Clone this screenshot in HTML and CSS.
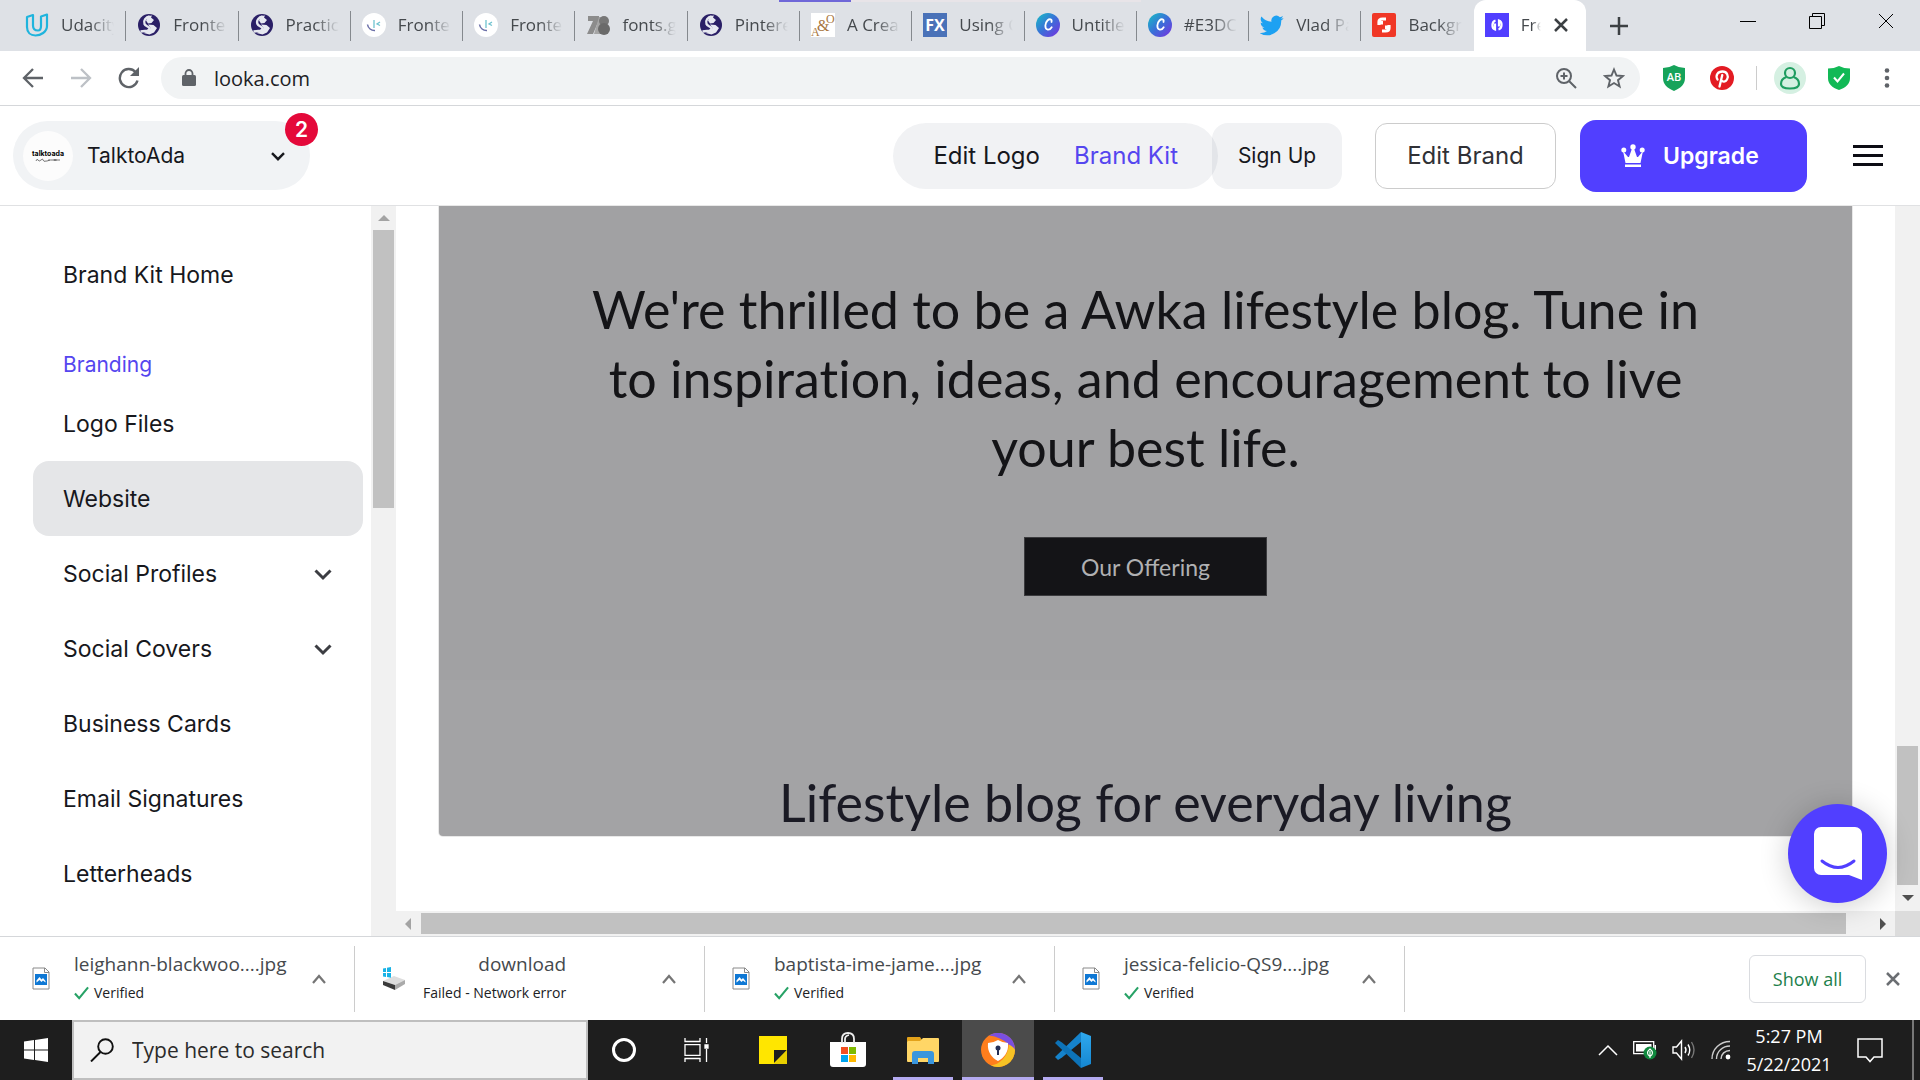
FILE: index.html
```html
<!DOCTYPE html>
<html lang="en">
<head>
<meta charset="utf-8">
<title>Free Brand Kit</title>
<link rel="stylesheet" href="styles.css">
</head>
<body>
<svg width="0" height="0" class="defs" aria-hidden="true">
  <defs>
    <linearGradient id="canva" x1="0" y1="0" x2="1" y2="1"><stop offset="0.1" stop-color="#1cb0c8"/><stop offset="0.5" stop-color="#3a6fd8"/><stop offset="1" stop-color="#7a2fe0"/></linearGradient>
    <linearGradient id="code" x1="0" y1="0" x2="0" y2="1"><stop offset="0" stop-color="#2fa9ee"/><stop offset="1" stop-color="#1586d0"/></linearGradient>
    <symbol id="globe" viewBox="0 0 24 24"><circle cx="12" cy="12" r="11" fill="#2a1f66"/><path d="M12.500 3.500c-3.500.5-6.500 4-5 7.500 1 2.500 4 2 5 4.500.3 1.200-.8 2-2.300 2.300l-6.700.7" fill="none" stroke="#e6e8f0" stroke-width="2.400"/><path d="M11 3l4-.5-1 2 3 2.500-2.500 3-3.500.500-2-3zM11 11.500l5.500.5 3.500 3-3 4.500-4.500 2-6-1.500 4.500-2 2.500-3z" fill="#e6e8f0"/></symbol>
    <symbol id="mentor" viewBox="0 0 24 24"><circle cx="12" cy="12" r="12" fill="#fff"/><path d="M5.500 11.500a7 7 0 0 0 7.500 6" fill="none" stroke="#6b6fa8" stroke-width="1.500"/><path d="M12 7v8M18 9l-3 2 3 1.500" fill="none" stroke="#6fc3cf" stroke-width="1.300"/></symbol>
    <symbol id="canva-logo" viewBox="0 0 24 24"><circle cx="12" cy="12" r="12" fill="url(#canva)"/><path d="M15.500 9c.8-3-2-3.500-4-1.500-2.500 2.500-3.200 8 0 9 1.800.3 3.300-.7 4.200-2.300" fill="none" stroke="#fff" stroke-width="1.800" stroke-linecap="round"/></symbol>
    <symbol id="chev" viewBox="0 0 20 20"><path d="M2.500 6.500l7.500 7.500 7.500-7.500" fill="none" stroke="currentColor" stroke-width="3"/></symbol>
    <symbol id="up" viewBox="0 0 16 16"><path d="M2 12l6-7 6 7" fill="none" stroke="#757575" stroke-width="2.200"/></symbol>
    <symbol id="doc" viewBox="0 0 18 23"><path d="M1 1h12l4 4v17H1z" fill="#fff" stroke="#8a8a8a"/><path d="M12.500 1v4.500H17" fill="none" stroke="#8a8a8a"/><path d="M3 7h12v11H3z" fill="#0f78d4"/><path d="M4.500 15.500v-2l3-3.500 2 2.500 1.500-1.500 2.500 3v1.500l-2.500-2-1.500 1.500-2-2z" fill="#fff"/></symbol>
    <symbol id="tick" viewBox="0 0 16 14"><path d="M1 7.500l4.500 5L15 1" fill="none" stroke="#27a266" stroke-width="2.200"/></symbol>
    <symbol id="cross" viewBox="0 0 16 16"><path d="M2 2l12 12M14 2L2 14" fill="none" stroke="currentColor" stroke-width="2.500"/></symbol>
  </defs>
</svg>

<header class="tabstrip">
  <span class="progress"></span><span class="progress-rest"></span>
  <nav class="tabs" aria-label="Tabs">
    <a class="tab" href="#"><svg class="fav" viewBox="0 0 24 24"><path d="M8 2L2 4v10c0 5.500 3.500 8.500 8.500 8.500S22 19 22 13V1.500L16 3.500V13c0 3-1 4.500-3 4.500-3.500 0-5-2-5-5z" fill="none" stroke="#1fb4dd" stroke-width="2.200" stroke-linejoin="round"/></svg><span class="tab-text">Udacity</span></a>
    <a class="tab" href="#"><svg class="fav"><use href="#globe"/></svg><span class="tab-text">Fronte</span></a>
    <a class="tab" href="#"><svg class="fav"><use href="#globe"/></svg><span class="tab-text">Practic</span></a>
    <a class="tab" href="#"><svg class="fav"><use href="#mentor"/></svg><span class="tab-text">Fronte</span></a>
    <a class="tab" href="#"><svg class="fav"><use href="#mentor"/></svg><span class="tab-text">Fronte</span></a>
    <a class="tab" href="#"><svg class="fav" viewBox="0 0 24 24"><path d="M2 3h11v4L7 21H1l6-13H2z" fill="#8c8c8c"/><path d="M13 4h3v17H8z" fill="#a5a5a5"/><circle cx="18" cy="8" r="5" fill="#777"/><circle cx="18" cy="16" r="6" fill="#6a6a6a"/></svg><span class="tab-text">fonts.g</span></a>
    <a class="tab" href="#"><svg class="fav"><use href="#globe"/></svg><span class="tab-text">Pintere</span></a>
    <a class="tab" href="#"><svg class="fav" viewBox="0 0 24 24"><path fill="#fff" d="M0 0h24v24H0z"/><g font-family="Liberation Serif, serif" fill="#a9773f"><text x="0" y="23" font-size="12">A</text><text x="6" y="18" font-size="16">&amp;</text><text x="15" y="10" font-size="12">O</text></g></svg><span class="tab-text">A Crea</span></a>
    <a class="tab" href="#"><svg class="fav" viewBox="0 0 24 24"><path fill="#4a72b8" d="M0 0h24v24H0z"/><text x="12" y="18" text-anchor="middle" font-family="Open Sans, sans-serif" font-weight="700" font-size="16" fill="#fff">FX</text></svg><span class="tab-text">Using C</span></a>
    <a class="tab" href="#"><svg class="fav"><use href="#canva-logo"/></svg><span class="tab-text">Untitle</span></a>
    <a class="tab" href="#"><svg class="fav"><use href="#canva-logo"/></svg><span class="tab-text">#E3DC</span></a>
    <a class="tab" href="#"><svg class="fav" viewBox="0 0 24 24"><path fill="#1da1f2" d="M23.600 4.900c-.9.400-1.800.6-2.800.8 1-.6 1.800-1.600 2.200-2.700-1 .6-2 1-3.100 1.200A4.900 4.900 0 0 0 11.500 8.700 14 14 0 0 1 1.400 3.600a4.900 4.900 0 0 0 1.500 6.600c-.8 0-1.600-.2-2.200-.6v.1c0 2.400 1.700 4.400 3.900 4.800-.7.200-1.500.2-2.200.1.600 2 2.400 3.400 4.600 3.400A9.900 9.900 0 0 1-.3 20 14 14 0 0 0 21.200 7.500c1-.7 1.800-1.600 2.400-2.600z"/></svg><span class="tab-text">Vlad Pa</span></a>
    <a class="tab no-sep" href="#"><svg class="fav" viewBox="0 0 24 24"><rect width="24" height="24" rx="2" fill="#f03726"/><path d="M14 6h-3.500C8.500 6 7 7 7 9v3M10 18h3.500c2 0 3.500-1 3.500-3v-3" fill="none" stroke="#fff" stroke-width="3.200"/><path d="M7 8h4v3.500H7zM13 12.500h4V16h-4z" fill="#fff"/></svg><span class="tab-text">Backgr</span></a>
    <a class="tab active" href="#" aria-current="page"><svg class="fav" viewBox="0 0 24 24"><path fill="#513fff" d="M0 0h24v24H0z"/><path d="M10.500 7.500c-4 1-4 8-.5 9v-6M13.500 16.500c4-1 4-8 .5-9v6" fill="none" stroke="#fff" stroke-width="2.200"/></svg><span class="tab-text">Fre</span><svg class="tab-x"><use href="#cross"/></svg></a>
  </nav>
  <button class="icon-btn new-tab" aria-label="New tab"><svg width="20" height="20" viewBox="0 0 20 20"><path d="M10 1v18M1 10h18" stroke="#3c4043" stroke-width="2.500"/></svg></button>
  <div class="win-controls">
    <button class="icon-btn" aria-label="Minimize"><svg width="16" height="16" viewBox="0 0 16 16"><path d="M0 8.500h16" stroke="#000"/></svg></button>
    <button class="icon-btn" aria-label="Restore"><svg width="16" height="16" viewBox="0 0 16 16" fill="none" stroke="#000"><path d="M.5 3.500h12v12H.5zM3.500 3.500v-3h12v12h-3"/></svg></button>
    <button class="icon-btn" aria-label="Close"><svg width="16" height="16" viewBox="0 0 16 16"><path d="M1 1l14 14M15 1L1 15" stroke="#000"/></svg></button>
  </div>
</header>

<div class="toolbar">
  <button class="icon-btn" aria-label="Back"><svg width="22" height="22" viewBox="0 0 22 22" fill="none" stroke="#5f6368" stroke-width="2.300"><path d="M21 11H2M11 2L2 11l9 9"/></svg></button>
  <button class="icon-btn" aria-label="Forward"><svg width="22" height="22" viewBox="0 0 22 22" fill="none" stroke="#bdc1c6" stroke-width="2.300"><path d="M1 11h19M11 2l9 9-9 9"/></svg></button>
  <button class="icon-btn" aria-label="Reload"><svg width="22" height="22" viewBox="0 0 22 22"><path d="M19.500 13.500A9 9 0 1 1 17.500 5" fill="none" stroke="#5f6368" stroke-width="2.400"/><path d="M21 0v9h-9z" fill="#5f6368"/></svg></button>
  <div class="omnibox">
    <svg width="14" height="18" viewBox="0 0 14 18"><rect y="6" width="14" height="11" rx="1.500" fill="#5f6368"/><path d="M3.500 7V4.500a3.500 3.500 0 0 1 7 0V7" fill="none" stroke="#5f6368" stroke-width="1.800"/></svg>
    <input class="url" type="text" value="looka.com" aria-label="Address">
    <button class="icon-btn" aria-label="Zoom"><svg width="22" height="22" viewBox="0 0 22 22" fill="none" stroke="#5f6368" stroke-width="2"><circle cx="9" cy="9" r="7"/><path d="M14 14l7 7M9 5.500v7M5.500 9h7"/></svg></button>
    <button class="icon-btn" aria-label="Bookmark"><svg width="22" height="22" viewBox="0 0 22 22" fill="none" stroke="#5f6368" stroke-width="1.900"><path d="M11 2.500l2.500 6 6.500.5-5 4.200 1.600 6.300L11 16l-5.600 3.500L7 13.200 2 9l6.500-.5z"/></svg></button>
  </div>
  <div class="extensions">
    <button class="icon-btn" aria-label="Ad blocker"><svg width="22" height="26" viewBox="0 0 22 26"><path d="M0 3Q6 3 11 0q5 3 11 3v10c0 6-4 10-11 13C4 23 0 19 0 13z" fill="#16a35a"/><text x="11" y="16" text-anchor="middle" font-family="Open Sans, sans-serif" font-weight="600" font-size="11" fill="#fff">AB</text></svg></button>
    <button class="icon-btn pin" aria-label="Save to Pinterest"><svg width="24" height="24" viewBox="0 0 24 24"><circle cx="12" cy="12" r="12" fill="#e31b23"/><path d="M9.500 20.500L12.300 9M7.500 13.500c-2.500-4.500.5-8 5-8s6.500 4.500 4.500 8c-1.500 2.700-4.500 2.500-5.500.8" fill="none" stroke="#fff" stroke-width="2.300" stroke-linecap="round"/></svg></button>
    <span class="divider"></span>
    <button class="icon-btn profile" aria-label="Profile"><svg width="22" height="24" viewBox="0 0 22 24" fill="none" stroke="#1f9d60" stroke-width="2.200"><circle cx="11" cy="7" r="5"/><path d="M7.500 11C4 12 2 15 2 18c0 3 4 4.500 9 4.500s9-1.500 9-4.500c0-3-2-6-5.500-7"/></svg></button>
    <button class="icon-btn" aria-label="Security"><svg width="22" height="24" viewBox="0 0 22 24"><path d="M0 2.500Q6 2.500 11 0q5 2.500 11 2.500V12c0 6-4 9.500-11 12C4 21.500 0 18 0 12z" fill="#12b956"/><path d="M6 11.500l3.500 4 6.500-8" fill="none" stroke="#fff" stroke-width="2"/></svg></button>
    <button class="icon-btn" aria-label="Menu"><svg width="6" height="20" viewBox="0 0 6 20" fill="#5f6368"><circle cx="3" cy="2.500" r="2.300"/><circle cx="3" cy="10" r="2.300"/><circle cx="3" cy="17.500" r="2.300"/></svg></button>
  </div>
</div>

<div class="site-head">
  <button class="brand">
    <span class="brand-logo"><svg width="50" height="50" viewBox="0 0 50 50"><text x="25" y="25" text-anchor="middle" font-family="Inter, sans-serif" font-weight="700" font-size="7">talktoada</text><path d="M13 30q1-3 2-1t3 0 2 0 4 1 2-1 4 0 2 0 5 0" fill="none" stroke="#555" stroke-width=".8"/></svg></span>
    <span>TalktoAda</span>
    <svg class="brand-chev"><use href="#chev"/></svg>
    <span class="badge">2</span>
  </button>
  <nav class="modes"><a href="#">Edit Logo</a><a href="#" class="current">Brand Kit</a></nav>
  <button class="signup">Sign Up</button>
  <button class="edit-brand">Edit Brand</button>
  <button class="upgrade"><svg width="24" height="24" viewBox="0 0 24 24" fill="#fff"><circle cx="2.800" cy="6" r="2.500"/><circle cx="12" cy="3" r="2.700"/><circle cx="21.200" cy="6" r="2.500"/><path d="M2 7l2.500 12h15L22 7l-5 6h-1L12.800 4h-1.600L8 13H7zM4 20.500h16V23H4z"/></svg>Upgrade</button>
  <button class="icon-btn burger" aria-label="Menu"><svg width="30" height="21" viewBox="0 0 30 21"><path d="M0 1.500h30M0 10.500h30M0 19.500h30" stroke="#0c0c14" stroke-width="3"/></svg></button>
</div>

<main class="workspace">
  <aside class="sidebar">
    <a class="item home" href="#">Brand Kit Home</a>
    <h2 class="group">Branding</h2>
    <a class="item" href="#">Logo Files</a>
    <a class="item selected" href="#" aria-current="page">Website</a>
    <button class="item">Social Profiles<svg class="item-chev"><use href="#chev"/></svg></button>
    <button class="item">Social Covers<svg class="item-chev"><use href="#chev"/></svg></button>
    <a class="item" href="#">Business Cards</a>
    <a class="item" href="#">Email Signatures</a>
    <a class="item" href="#">Letterheads</a>
  </aside>
  <div class="vbar"><span class="arrow arrow-up"></span><span class="thumb side-thumb"></span></div>
  <div class="content">
    <section class="stage">
      <div class="preview">
        <div class="hero">
          <p class="hero-text">We're thrilled to be a Awka lifestyle blog. Tune in to inspiration, ideas, and encouragement to live your best life.</p>
          <button class="offering">Our Offering</button>
        </div>
        <div class="living"><h1>Lifestyle blog for everyday living</h1></div>
      </div>
      <button class="chat" aria-label="Open chat"><svg width="48" height="54" viewBox="0 0 48 54"><path d="M7 0h34a7 7 0 0 1 7 7v46l-13-5H7a7 7 0 0 1-7-7V7a7 7 0 0 1 7-7z" fill="#fff"/><path d="M8 34q16 13 32 0" fill="none" stroke="#513fff" stroke-width="3" stroke-linecap="round"/></svg></button>
    </section>
    <div class="hbar"><span class="arrow arrow-left"></span><span class="thumb page-thumb-x"></span><span class="arrow arrow-right"></span></div>
  </div>
  <div class="vbar page-bar"><span class="thumb page-thumb"></span><span class="arrow arrow-down"></span><span class="corner"></span></div>
</main>

<section class="downloads" aria-label="Downloads">
  <div class="dl"><svg class="dl-icon"><use href="#doc"/></svg><div class="dl-text"><span class="dl-name">leighann-blackwoo....jpg</span><span class="dl-state"><svg width="15" height="14"><use href="#tick"/></svg>Verified</span></div><button class="icon-btn" aria-label="Options"><svg width="16" height="16"><use href="#up"/></svg></button></div>
  <div class="dl"><svg class="dl-icon wide" viewBox="0 0 23 23"><path d="M1 14l11-5 11 4-10 5z" fill="#ddd"/><path d="M1 14l12 4v5L1 18z" fill="#3a3a3a"/><path d="M13 18l10-5v4l-10 6z" fill="#aaa"/><path d="M1 1.500l3-.5v4H1zM5 .7L9 0v5H5zM1 6h3v4l-3-.5zM5 6h4v4.700L5 10z" fill="#19b3e6"/></svg><div class="dl-text failed"><span class="dl-name">download</span><span class="dl-state">Failed - Network error</span></div><button class="icon-btn" aria-label="Options"><svg width="16" height="16"><use href="#up"/></svg></button></div>
  <div class="dl"><svg class="dl-icon"><use href="#doc"/></svg><div class="dl-text"><span class="dl-name">baptista-ime-jame....jpg</span><span class="dl-state"><svg width="15" height="14"><use href="#tick"/></svg>Verified</span></div><button class="icon-btn" aria-label="Options"><svg width="16" height="16"><use href="#up"/></svg></button></div>
  <div class="dl"><svg class="dl-icon"><use href="#doc"/></svg><div class="dl-text"><span class="dl-name">jessica-felicio-QS9....jpg</span><span class="dl-state"><svg width="15" height="14"><use href="#tick"/></svg>Verified</span></div><button class="icon-btn" aria-label="Options"><svg width="16" height="16"><use href="#up"/></svg></button></div>
  <button class="show-all">Show all</button>
  <button class="icon-btn dl-close" aria-label="Close downloads"><svg width="16" height="16"><use href="#cross"/></svg></button>
</section>

<footer class="taskbar">
  <button class="start" aria-label="Start"><svg width="24" height="24" viewBox="0 0 24 24" fill="#fff"><path d="M0 3.500L10 2v9.500H0zM11 1.900L24 0v11.500H11zM0 12.500h10V22L0 20.500zM11 12.500h13V24l-13-1.900z"/></svg></button>
  <label class="search"><svg width="24" height="24" viewBox="0 0 24 24" fill="none" stroke="#111" stroke-width="1.900"><circle cx="15.500" cy="8.500" r="7.300"/><path d="M10.500 14L1 23.500"/></svg><input type="search" placeholder="Type here to search" aria-label="Search"></label>
  <button class="task" aria-label="Cortana"><svg width="26" height="26" viewBox="0 0 26 26"><circle cx="13" cy="13" r="10.500" fill="none" stroke="#fff" stroke-width="3"/></svg></button>
  <button class="task" aria-label="Task view"><svg width="25" height="24" viewBox="0 0 25 24" fill="none" stroke="#fff" stroke-width="1.300"><path d="M1 0v3.500h15V0M1 24v-3.500h15V24M1 6.700h15v10.600H1zM22.500 0v5M22.500 11v13"/><path d="M21 7h3v3h-3z" fill="#fff"/></svg></button>
  <div class="apps">
    <button class="task" aria-label="Sticky Notes"><svg width="28" height="28" viewBox="0 0 28 28"><path d="M0 0h28v28H0z" fill="#ffe600"/><path d="M15 14h13L15 27z" fill="#1e1e1e"/><path d="M28 14v14H15z" fill="#e8cf00"/></svg></button>
    <button class="task" aria-label="Store"><svg width="36" height="36" viewBox="0 0 36 36"><path d="M0 10h36v22q0 3-3 3H3q-3 0-3-3z" fill="#fff"/><path d="M12 11V7q0-6 6-6t6 6v4M15 11V7q0-3 4-4" fill="none" stroke="#eee" stroke-width="1.800"/><path d="M11 15h7v7h-7z" fill="#f25022"/><path d="M19 15h7v7h-7z" fill="#7fba00"/><path d="M11 23h7v7h-7z" fill="#00a4ef"/><path d="M19 23h7v7h-7z" fill="#ffb900"/></svg></button>
    <button class="task open" aria-label="File Explorer"><svg width="32" height="28" viewBox="0 0 32 28"><path d="M0 2q0-1 1-1h12l2 3v4H0z" fill="#e3a21a"/><path d="M1 5h12l3-3h15q1 0 1 1v22q0 1-1 1H1q-1 0-1-1V6z" fill="#ffd666"/><path d="M5 28V18q0-3 3-3h16q3 0 3 3v10h-6v-6H11v6z" fill="#3a96dd"/></svg></button>
    <button class="task open running" aria-label="Browser"><svg width="34" height="34" viewBox="0 0 34 34"><circle cx="17" cy="17" r="17" fill="#ff7e1d"/><path d="M8 2.500A17 17 0 0 1 34 17L27 11Q20 4 8 2.500z" fill="#7a4fe0"/><path d="M34 17A17 17 0 0 1 10 32.500c8-1 17-8 18-21 3 2 5 3 6 5.500z" fill="#f7c325"/><path d="M7 10q5 0 10-3 5 3 10 3c1 9-4 15-10 18C11 25 6 19 7 10z" fill="#fff"/><circle cx="17" cy="15" r="2.500" fill="#252f56"/><path d="M16 15h2v7h-2z" fill="#252f56"/></svg></button>
    <button class="task open" aria-label="Code"><svg width="36" height="36" viewBox="0 0 36 36"><path d="M26 10L7 25.500 3 28l-3-3L26 0z" fill="#1583cc"/><path d="M26 26L7 10.500 3 8l-3 3 26 25z" fill="#0d73b8"/><path d="M26 0l10 4v28l-10 4z" fill="url(#code)"/></svg></button>
  </div>
  <div class="tray">
    <svg width="20" height="12" viewBox="0 0 20 12"><path d="M1 11l9-9 9 9" fill="none" stroke="#fff" stroke-width="1.500"/></svg>
    <svg width="24" height="20" viewBox="0 0 24 20"><path d="M.7 1.700h20v12H.7z" fill="none" stroke="#fff" stroke-width="1.300"/><path d="M3 4h15.500v7.500H3zM21.500 5h1.500v5h-1.500z" fill="#fff"/><circle cx="17" cy="13" r="6.500" fill="#10893e"/><path d="M17 9q-5 4 0 7.500Q22 13 17 9zM17 11v7" fill="none" stroke="#fff" stroke-width="1.100"/></svg>
    <svg width="24" height="22" viewBox="0 0 24 22" fill="none" stroke="#fff" stroke-width="1.400"><path d="M1 8h3.500l5-6v18l-5-6H1z"/><path d="M13 8q2 3 0 6M16 5.500q3.500 5.500 0 11"/><path d="M19.500 3q5 8 0 16" stroke="#777"/></svg>
    <svg width="20" height="20" viewBox="0 0 20 20" fill="none" stroke="#ccc" stroke-width="1.400"><path d="M1 19C1 9 9 1.500 19 1.500M5.500 19C5.500 11.500 11.500 6 19 6M10 19c0-5 4-8.500 9-8.500"/><circle cx="17" cy="17" r="1.700" fill="#fff" stroke="#fff"/></svg>
    <div class="clock"><span>5:27 PM</span><span>5/22/2021</span></div>
    <svg width="26" height="26" viewBox="0 0 26 26"><path d="M1 2h24v18h-8l-4 4.500L9 20H1z" fill="none" stroke="#fff" stroke-width="1.500"/></svg>
    <span class="desk"></span>
  </div>
</footer>
</body>
</html>
```
FILE: styles.css
```css
* { box-sizing: border-box; }

body {
  margin: 0;
  min-height: 100vh;
  display: flex;
  flex-direction: column;
  background: #fff;
  color: #202124;
  font-family: "Open Sans", "Noto Sans", sans-serif;
}

a { color: inherit; text-decoration: none; }
button, input { font: inherit; color: inherit; margin: 0; padding: 0; border: 0; background: none; outline: 0; }
svg { display: block; flex: none; }
.defs { position: absolute; }
.icon-btn { display: flex; align-items: center; justify-content: center; flex: none; }

/* Browser tab strip */
.tabstrip {
  position: relative;
  display: flex;
  height: 51px;
  padding-left: 14px;
  background: #dee1e6;
}
.progress { position: absolute; top: 0; left: 779px; width: 72px; height: 2px; background: #6f67d8; }
.progress-rest { position: absolute; top: 0; left: 851px; width: 290px; height: 2px; background: #e8e4e8; }
.tabs { flex: 1; display: grid; grid-auto-flow: column; grid-auto-columns: minmax(0, 1fr); min-width: 0; }
.tab {
  position: relative;
  min-width: 0;
  display: flex;
  align-items: center;
  gap: 12px;
  padding: 0 12px 2px 11px;
  font-size: 17px;
  color: #45494d;
}
.tab::after { content: ""; position: absolute; right: 0; top: 11px; width: 1px; height: 30px; background: #85898e; }
.tab.no-sep::after, .tab.active::after { display: none; }
.tab.active { padding-right: 17px; background: #fff; border-radius: 12px 12px 0 0; }
.fav { width: 24px; height: 24px; }
.tab-text {
  flex: 1;
  min-width: 0;
  overflow: hidden;
  white-space: nowrap;
  mask-image: linear-gradient(to right, #000 55%, transparent);
}
.tab-x { width: 16px; height: 16px; color: #3c4043; }
.new-tab { width: 66px; }
.win-controls { display: flex; margin-left: 61px; padding-bottom: 9px; }
.win-controls .icon-btn { width: 69px; }

/* Address bar */
.toolbar {
  display: flex;
  align-items: center;
  height: 55px;
  padding: 0 30px 0 22px;
  gap: 26px;
  border-bottom: 1px solid #d5d7da;
}
.omnibox {
  flex: 1;
  display: flex;
  align-items: center;
  gap: 18px;
  height: 42px;
  margin-left: -5px;
  padding: 0 15px 0 21px;
  border-radius: 21px;
  background: #f1f3f4;
}
.omnibox .icon-btn { margin-left: 8px; }
.url { flex: 1; min-width: 0; font-size: 20px; }
.extensions { display: flex; align-items: center; gap: 22px; margin-left: -3px; }
.pin { margin-left: 3px; }
.divider { width: 1px; height: 24px; background: #ccc; }
.profile { width: 32px; height: 32px; border-radius: 50%; background: #d5f0e2; margin-left: -5px; }
.extensions .icon-btn:last-child { margin-left: 12px; }

/* Site header */
.site-head {
  display: flex;
  align-items: center;
  height: 100px;
  padding: 0 37px 0 13px;
  border-bottom: 1px solid #e0e1e3;
  font-family: Inter, "Open Sans", sans-serif;
  font-size: 24px;
  color: #17181d;
}
.brand {
  position: relative;
  display: flex;
  align-items: center;
  gap: 14px;
  width: 297px;
  height: 69px;
  padding: 0 24px 0 10px;
  border-radius: 35px;
  background: #f1f3f5;
  font-size: 21px;
}
.brand-logo { width: 50px; height: 50px; border-radius: 50%; background: #fcfcfc; }
.brand-chev { width: 16px; height: 16px; margin-left: auto; }
.badge {
  position: absolute;
  right: -8px;
  top: -8px;
  width: 33px;
  height: 33px;
  border-radius: 50%;
  background: #e4093a;
  color: #fff;
  line-height: 33px;
  text-align: center;
  font-weight: 600;
}
.modes {
  display: flex;
  align-items: center;
  gap: 34px;
  height: 66px;
  margin-left: auto;
  padding: 0 40px;
  border-radius: 33px;
  background: rgba(20, 40, 60, 0.06);
}
.current { color: #5546ef; }
.signup {
  width: 130px;
  height: 66px;
  margin-left: -6px;
  border-radius: 16px;
  background: rgba(20, 40, 60, 0.06);
  font-size: 21px;
}
.edit-brand { width: 181px; height: 66px; margin-left: 33px; border: 1px solid #ccc; border-radius: 12px; color: #303136; }
.upgrade {
  display: flex;
  align-items: center;
  gap: 18px;
  width: 227px;
  height: 72px;
  margin-left: 24px;
  padding-left: 41px;
  border-radius: 16px;
  background: #513fff;
  color: #fff;
  font-size: 23px;
  font-weight: 600;
}
.burger { margin-left: 46px; }

/* Workspace */
.workspace { flex: 1; display: flex; min-height: 0; }
.sidebar {
  width: 371px;
  padding: 31px 8px 0 33px;
  font-family: Inter, "Open Sans", sans-serif;
  font-size: 23px;
  color: #17181d;
}
.item {
  display: flex;
  align-items: center;
  justify-content: space-between;
  width: 100%;
  height: 75px;
  padding: 0 30px;
  border-radius: 16px;
}
.item.selected { background: #e5e6e8; }
.group { margin: 39px 0 7px; padding-left: 30px; font-size: 21px; line-height: 28px; font-weight: 400; color: #5546ef; }
.item-chev { width: 20px; height: 20px; color: #3c3d42; }

/* Scroll bars */
.vbar, .hbar { display: flex; align-items: center; background: #f1f1f1; }
.vbar { flex-direction: column; width: 25px; }
.hbar { height: 25px; padding: 0 9px; gap: 10px; }
.thumb { background: #c1c1c1; }
.side-thumb { width: 21px; height: 278px; margin-top: 9px; }
.page-bar { justify-content: flex-end; }
.page-thumb { width: 21px; height: 139px; margin-bottom: 10px; }
.page-thumb-x { flex: 1; height: 21px; margin-right: 24px; }
.arrow { border: 6px solid transparent; flex: none; }
.arrow-up { border-top-width: 0; border-bottom-color: #a3a3a3; margin-top: 9px; }
.arrow-down { border-bottom-width: 0; border-top-color: #505050; margin-bottom: 10px; }
.arrow-left { border-left-width: 0; border-right-color: #a3a3a3; }
.arrow-right { border-right-width: 0; border-left-color: #505050; }
.corner { width: 25px; height: 25px; background: #dcdcdc; }

/* Website preview */
.content { flex: 1; display: flex; flex-direction: column; min-width: 0; }
.stage { position: relative; flex: 1; padding: 0 43px; }
.preview {
  overflow: hidden;
  border-radius: 0 0 4px 4px;
  box-shadow: 0 0 0 1px #e8e8e8;
  background: #a3a3a5;
  color: #141417;
  font-family: Lato, "Open Sans", sans-serif;
  text-align: center;
}
.hero {
  display: flex;
  flex-direction: column;
  align-items: center;
  padding: 69px 135px 84px;
  background: #a1a1a3;
}
.hero-text { margin: 0 0 55px; font-size: 52px; line-height: 69px; font-variant-ligatures: none; }
.offering { width: 243px; height: 59px; border: 1px solid #3b3b3e; background: #141417; color: #b0b0b2; font-size: 23px; }
.living { padding-top: 88px; color: #1a1a24; }
.living h1 { margin: 0; font-size: 52px; line-height: 68px; font-weight: 400; }
.chat {
  position: absolute;
  right: 8px;
  bottom: 8px;
  width: 99px;
  height: 99px;
  display: flex;
  align-items: center;
  justify-content: center;
  border-radius: 50%;
  background: #513fff;
  box-shadow: 0 3px 30px rgba(0, 0, 0, 0.2);
}

/* Download shelf */
.downloads { display: flex; align-items: center; height: 84px; border-top: 1px solid #d5d7da; padding: 0 19px 0 5px; }
.dl {
  display: flex;
  align-items: center;
  width: 350px;
  height: 66px;
  padding: 0 27px 0 27px;
  border-right: 1px solid #ccc;
}
.dl-icon { width: 18px; height: 23px; }
.dl-icon.wide { width: 23px; }
.dl-text { display: flex; flex-direction: column; flex: 1; margin-left: 24px; font-size: 19px; line-height: 28px; color: #45494d; white-space: nowrap; }
.dl-text.failed { flex: none; margin: 0 auto 0 18px; align-items: flex-end; }
.dl-state { display: flex; align-items: center; gap: 5px; padding-top: 1px; font-size: 14px; color: #202124; }
.show-all { width: 117px; height: 48px; margin-left: auto; border: 1px solid #dadce0; border-radius: 6px; color: #1e7f4c; font-size: 18px; }
.dl-close { margin-left: 19px; color: #6b6e72; }

/* Taskbar */
.taskbar { display: flex; height: 60px; background: #1e1e1e; color: #fff; }
.start { width: 72px; display: flex; align-items: center; justify-content: center; }
.search {
  display: flex;
  align-items: center;
  gap: 18px;
  width: 516px;
  padding: 0 16px;
  border: 2px solid #bfbfbf;
  background: #f2f2f2;
}
.search input { flex: 1; min-width: 0; font-size: 21px; }
.search input::placeholder { color: #2b2b2b; opacity: 1; }
.task { position: relative; display: flex; align-items: center; justify-content: center; width: 72px; height: 60px; }
.apps { display: flex; gap: 3px; margin-left: 5px; }
.open::after { content: ""; position: absolute; left: 6px; right: 6px; bottom: 0; height: 3px; background: #b4aaf0; }
.running { background: #4b4b4b; }
.running::after { left: 0; right: 0; }
.tray { display: flex; align-items: center; gap: 15px; margin-left: auto; }
.clock { display: flex; flex-direction: column; align-items: center; width: 86px; font-size: 18px; line-height: 28px; }
.clock + svg { margin-left: 10px; }
.desk { width: 8px; height: 60px; margin-left: 14px; border-left: 2px solid #777; }
```
